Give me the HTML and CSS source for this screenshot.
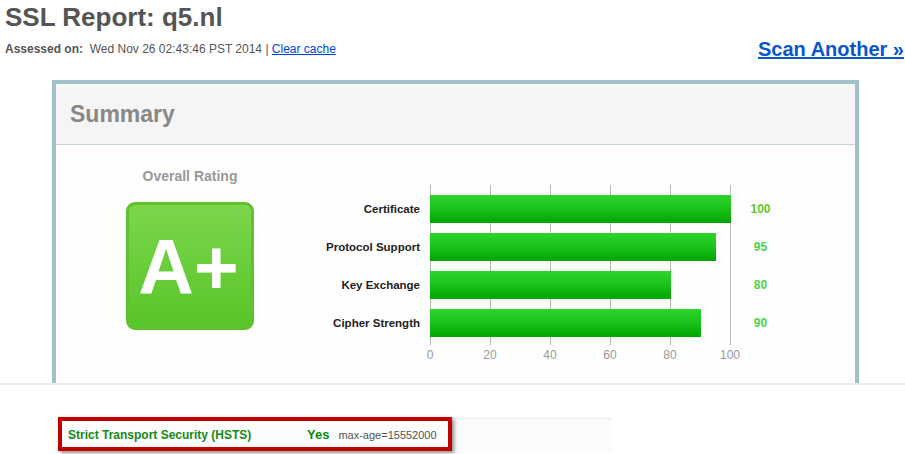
FILE: index.html
```html
<!DOCTYPE html>
<html lang="en">
<head>
<meta charset="utf-8">
<title>SSL Report: q5.nl</title>
<link rel="stylesheet" href="styles.css">
</head>
<body>
<header class="top">
  <h1 class="title">SSL Report: q5.nl</h1>
  <div class="meta">
    <div class="assessed"><b>Assessed on:</b>&nbsp; Wed Nov 26 02:43:46 PST 2014 | <a href="#" class="link">Clear cache</a></div>
    <a href="#" class="scan">Scan Another &raquo;</a>
  </div>
</header>

<section class="summary">
  <div class="summary-head">Summary</div>
  <div class="summary-body">
    <div class="rating">
      <div class="rating-title">Overall Rating</div>
      <div class="grade">A+</div>
    </div>
    <div class="chart">
      <div class="plot-bg"></div>
      <div class="label r1">Certificate</div>
      <div class="track r1"><div class="bar" style="width:100%"></div></div>
      <div class="value v100 r1">100</div>
      <div class="label r2">Protocol Support</div>
      <div class="track r2"><div class="bar" style="width:95%"></div></div>
      <div class="value r2">95</div>
      <div class="label r3">Key Exchange</div>
      <div class="track r3"><div class="bar" style="width:80%"></div></div>
      <div class="value r3">80</div>
      <div class="label r4">Cipher Strength</div>
      <div class="track r4"><div class="bar" style="width:90%"></div></div>
      <div class="value r4">90</div>
      <div class="axis">
        <span>0</span><span>20</span><span>40</span><span>60</span><span>80</span><span>100</span>
      </div>
    </div>
  </div>
</section>
<div class="divider"></div>

<div class="hsts-row">
  <div class="highlight">
    <span class="hsts-label">Strict Transport Security (HSTS)</span>
    <span class="hsts-yes">Yes</span>
    <span class="hsts-detail">max-age=15552000</span>
  </div>
</div>
</body>
</html>
```

FILE: styles.css
```css
* { box-sizing: border-box; }
html, body { margin: 0; padding: 0; background: #fff; }
body {
  font-family: "Liberation Sans", Arial, Helvetica, sans-serif;
  color: #555;
  width: 905px;
  height: 454px;
  overflow: hidden;
}

.top { padding: 2px 1px 0 5px; }
.title {
  margin: 0;
  font-size: 26px;
  line-height: 30px;
  font-weight: bold;
  color: #555;
}
.meta {
  margin-top: 4px;
  height: 24px;
  display: flex;
  justify-content: space-between;
  align-items: center;
}
.assessed { font-size: 12px; color: #555; padding-top: 2px; }
.assessed b { color: #555; }
.link { color: #0044dd; text-decoration: underline; }
.scan {
  font-size: 20px;
  font-weight: bold;
  color: #0a55cc;
  text-decoration: underline;
  padding-top: 2px;
}

.summary {
  margin: 20px 0 0 52px;
  width: 807px;
  border: 4px solid #a2c0c5;
  border-bottom: 0;
}
.summary-head {
  height: 61px;
  background: #f5f5f5;
  border-top: 1px solid #fafafa;
  border-bottom: 1px solid #c6d6d8;
  padding-left: 14px;
  display: flex;
  align-items: center;
  font-size: 23px;
  font-weight: bold;
  color: #888;
}
.summary-body {
  height: 238px;
  background: #fefefe;
  display: flex;
}

.rating {
  width: 268px;
  display: flex;
  flex-direction: column;
  align-items: center;
  padding-top: 23px;
}
.rating-title {
  font-size: 14px;
  line-height: 16px;
  font-weight: bold;
  color: #999;
}
.grade {
  margin-top: 18px;
  width: 128px;
  height: 128px;
  border: 3px solid #60c02e;
  border-radius: 9px;
  background: linear-gradient(to bottom, #7cd64c, #58c528);
  color: #fff;
  font-size: 77px;
  font-weight: bold;
  display: flex;
  align-items: center;
  justify-content: center;
  padding-right: 3px;
  padding-top: 2px;
}

.chart {
  padding-top: 40px;
  display: grid;
  grid-template-columns: 106px 301px 58px;
  grid-template-rows: 5px 38px 38px 38px 38px 3px auto;
}
.plot-bg {
  grid-column: 2;
  grid-row: 1 / 7;
  background: repeating-linear-gradient(to right, #b9b9b9 0 1px, transparent 1px 60px);
}
.r1 { grid-row: 2; }
.r2 { grid-row: 3; }
.r3 { grid-row: 4; }
.r4 { grid-row: 5; }
.label {
  grid-column: 1;
  display: flex;
  align-items: center;
  justify-content: flex-end;
  padding-right: 10px;
  white-space: nowrap;
  font-size: 11.5px;
  font-weight: bold;
  color: #222;
}
.track {
  grid-column: 2;
  padding: 5px 0;
}
.bar {
  height: 28px;
  background: linear-gradient(to bottom, #2fd32f 0%, #1cc41c 45%, #00a400 100%);
}
.value {
  grid-column: 3;
  display: flex;
  align-items: center;
  justify-content: center;
  padding-left: 1px;
  font-size: 12px;
  font-weight: bold;
  color: #50d24a;
}
.value.v100 { color: #62c62e; }
.axis {
  grid-column: 2;
  grid-row: 7;
  margin: 0 -30px;
  padding-top: 3px;
  display: flex;
}
.axis span {
  width: 60px;
  text-align: center;
  font-size: 12px;
  line-height: 14px;
  color: #999;
}

.divider {
  height: 2px;
  background: #e7eef3;
}

.hsts-row {
  margin: 33px 0 0 58px;
  width: 554px;
  height: 34px;
  border-top: 1px solid #ececec;
  background: #fbfbfb;
}
.highlight {
  margin-top: -2px;
  width: 394px;
  height: 34px;
  border: 4px solid #c00000;
  box-shadow: 2px 2px 4px rgba(0, 0, 0, 0.45);
  background: #fcfcfc;
  display: flex;
  align-items: center;
  padding-left: 6px;
  padding-top: 1px;
}
.hsts-label {
  width: 239px;
  font-size: 12px;
  font-weight: bold;
  color: #178a17;
}
.hsts-yes {
  font-size: 13px;
  font-weight: bold;
  color: #0a8a0a;
  margin-right: 9px;
}
.hsts-detail {
  font-size: 11px;
  color: #555;
}
```
